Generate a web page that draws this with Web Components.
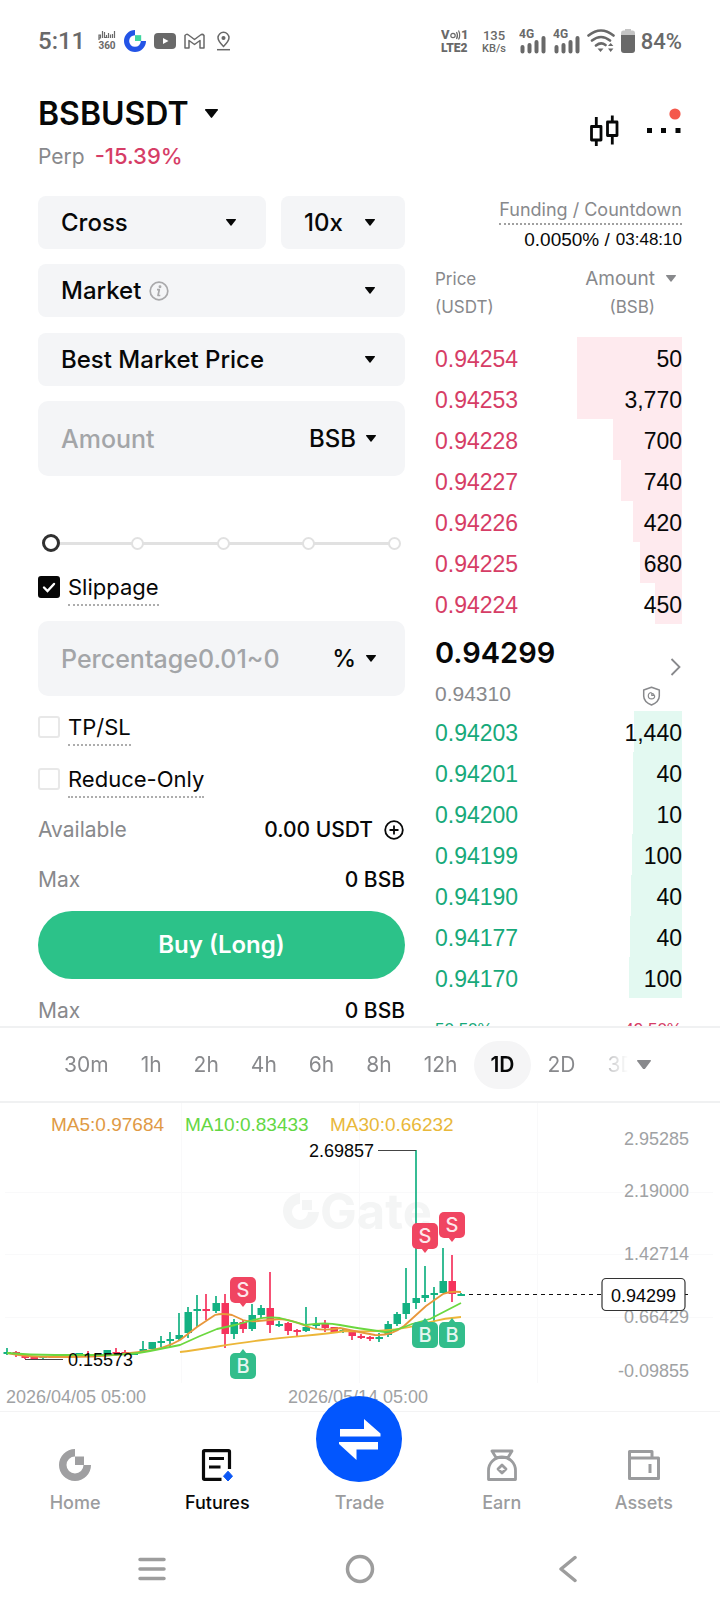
<!DOCTYPE html>
<html lang="en">
<head>
<meta charset="utf-8">
<meta name="viewport" content="width=device-width, initial-scale=1">
<title>BSBUSDT Perp</title>
<style>
  html, body { margin: 0; height: 100%; background: #fff; }
  body {
    --ink: #070808;
    --muted: #88898c;
    --faint: #a0a2a4;
    --field: #f4f5f7;
    --up: #17a97a;
    --down: #d63d66;
    --sans: Inter, "Liberation Sans", sans-serif;
    --num: "Liberation Sans", Arial, sans-serif;
    font-family: var(--sans);
    color: var(--ink);
  }
</style>
</head>
<body>
<trade-app></trade-app>

<script>
const define = (name, html, setup) => {
  const tpl = document.createElement('template');
  tpl.innerHTML = html;
  customElements.define(name, class extends HTMLElement {
    connectedCallback() {
      if (this.shadowRoot) return;
      const root = this.attachShadow({ mode: 'open' });
      root.append(tpl.content.cloneNode(true));
      if (setup) setup(this, root);
    }
  });
};

/* Small down-pointing triangle */
define('caret-down', `
<style>
  :host { display: block; flex: none; width: var(--caret, 10px); color: inherit; pointer-events: none; }
  svg { display: block; width: 100%; }
</style>
<svg viewBox="0 0 10 7" aria-hidden="true"><path d="M.4 0h9.2q.6.3.2.9L5.5 6.6q-.5.5-1 0L.2.9Q-.2.3.4 0z" fill="currentColor"/></svg>`);

define('status-bar', `
<style>
  :host { display: flex; align-items: center; justify-content: space-between; height: 82px; padding: 0 38px; color: #696969; font-family: Roboto, sans-serif; font-weight: 500; }
  div { display: flex; align-items: center; }
  svg { display: block; flex: none; }
  .time { font-size: 24px; width: 60px; }
  .left { gap: 8px; }
  .left .time { margin-right: -8px; }
  .right { gap: 6px; }
  .pct { font-size: 22px; }
  text { fill: currentColor; font-family: Roboto, sans-serif; }
</style>
<div class="left">
  <span class="time">5:11</span>
  <svg width="18" height="24" viewBox="0 0 18 24" fill="none" stroke="currentColor" stroke-width="1.200">
    <path d="M1 11V6h1.500v3H1M4.500 2v7M6.500 3v6M6.500 8.500h3M8.500 6v3M10.500 4v5M12.500 5.500v3.500M14.500 5v4M16.500 2v7"/>
    <text x="9" y="20" font-size="10" font-weight="700" text-anchor="middle" stroke="none">360</text>
  </svg>
  <svg width="22" height="22" viewBox="0 0 32 32"><path d="M16 0v7.500A8.500 8.500 0 1 0 24.500 16H32A16 16 0 1 1 16 0z" fill="#2354e6"/><path d="M16 7.500h9V16h-9z" fill="#3fd6a0"/></svg>
  <svg width="22" height="16" viewBox="0 0 22 16"><rect width="22" height="16" rx="4" fill="currentColor"/><path d="M9 5l5.500 3L9 11z" fill="#fff"/></svg>
  <svg width="22" height="17" viewBox="0 0 22 17" fill="none" stroke="currentColor" stroke-width="1.500" stroke-linejoin="round"><path d="M1 2.500Q2.500.5 4.500 2L10.500 6.500 16.500 2q2-1.500 3.500.5V15h-4V7.500L10.500 11.500 5 7.500V15H1z"/></svg>
  <svg width="20" height="20" viewBox="0 0 20 20" fill="none" stroke="currentColor" stroke-width="1.500"><path d="M9.500 15.500C5.500 11.500 4 9.500 4 6.800a5.500 5.500 0 0 1 11 0c0 2.700-1.500 4.700-5.500 8.700z"/><circle cx="9.500" cy="7" r="1.300" fill="currentColor"/><path d="M3 18.700h13"/></svg>
</div>
<div class="right">
  <svg width="35" height="30" viewBox="0 0 35 30" fill="none" stroke="currentColor">
    <text x="0" y="13" font-size="13" font-weight="800" stroke="none">V</text>
    <circle cx="12" cy="9.500" r="2.200" stroke-width="1.200"/>
    <path d="M15.500 6q2 3.500 0 7M17.500 4.500q2.500 5 0 9" stroke-width="1.200"/>
    <text x="20" y="13" font-size="13" font-weight="800" stroke="none">1</text>
    <text x="0" y="26" font-size="12" font-weight="900" stroke="none">LTE2</text>
  </svg>
  <svg width="31" height="30" viewBox="0 0 31 30">
    <text x="12" y="14" font-size="13" font-weight="500" text-anchor="middle">135</text>
    <text x="12" y="26" font-size="11" font-weight="500" text-anchor="middle">KB/s</text>
  </svg>
  <svg width="28" height="26" viewBox="0 0 28 26">
    <text x="0" y="10" font-size="12" font-weight="700">4G</text>
    <path d="M3.500 19v4.500M10.500 17v6.500M17.500 14v9.500M24.500 10v13.500" stroke="currentColor" stroke-width="4" stroke-linecap="round"/>
  </svg>
  <svg width="28" height="26" viewBox="0 0 28 26">
    <text x="0" y="10" font-size="12" font-weight="700">4G</text>
    <path d="M3.500 19v4.500M10.500 17v6.500M17.500 14v9.500M24.500 10v13.500" stroke="currentColor" stroke-width="4" stroke-linecap="round"/>
  </svg>
  <svg width="28" height="24" viewBox="0 0 28 24" fill="none" stroke="currentColor" stroke-width="2.600" stroke-linecap="round">
    <path d="M1.500 6.500Q14-3.500 26.500 6.500M5 11.500q9-7 18 0M9 16.500q5-4 9.500-.5"/>
    <path d="M10.500 19.500h6L13.500 23zM21 17l2.700-3 2.700 3zM21 19.500h5.400L23.700 23z" fill="currentColor" stroke="none"/>
  </svg>
  <svg width="14" height="24" viewBox="0 0 14 24"><path d="M4 1.500V0h6v1.500h2q2 0 2 2.500v3H0V4q0-2.500 2-2.500z" fill="#c4c4c4"/><path d="M0 6h14v15q0 3-3 3H3q-3 0-3-3z" fill="currentColor"/></svg>
  <span class="pct">84%</span>
</div>`);

define('pair-header', `
<style>
  :host { display: flex; align-items: center; justify-content: space-between; padding: 12px 38px 26px; }
  h1 { margin: 0; font: 600 32px/40px var(--sans); }
  button { display: flex; align-items: center; border: 0; padding: 0; background: none; color: inherit; font: inherit; }
  .pair { gap: 16px; --caret: 13px; }
  p { display: flex; align-items: baseline; gap: 10px; height: 28px; margin: 8px 0 0; font-size: 21px; line-height: 28px; color: var(--muted); }
  b { font-weight: 500; font-size: 22px; color: var(--down); }
  .tools { display: flex; gap: 27px; }
  svg { display: block; }
</style>
<div>
  <button class="pair"><h1>BSBUSDT</h1><caret-down></caret-down></button>
  <p>Perp <b>-15.39%</b></p>
</div>
<div class="tools">
  <button aria-label="Chart">
    <svg width="30" height="34" viewBox="0 0 30 34" fill="none" stroke="currentColor" stroke-width="2.800" stroke-linejoin="round"><path d="M2.500 11.500h9.500v13.500H2.500zM18.500 7h9.500v13.500h-9.500zM7.300 2v9.500M7.300 25v6M23.300 .5V7M23.300 20.500v9"/></svg>
  </button>
  <button aria-label="More">
    <svg width="36" height="52" viewBox="0 0 36 52"><path d="M1 22h5v5H1zM15 22h5v5h-5zM29.500 22h5v5h-5z" fill="currentColor"/><circle cx="29" cy="8" r="5.600" fill="#f4584c"/></svg>
  </button>
</div>`);

/* Grey drop-down field; whatever is slotted sits right after the value */
define('pick-field', `
<style>
  :host { display: flex; align-items: center; height: 53px; padding: 0 30px 0 23px; border-radius: 8px; background: var(--field); min-width: 0; box-sizing: border-box; }
  select { appearance: none; field-sizing: content; border: 0; margin: 0; padding: 0; background: none; color: inherit; font: 500 24px/32px var(--sans); }
  caret-down { margin-left: auto; }
</style>
<select><option></option></select><slot></slot><caret-down></caret-down>`,
(el, root) => {
  const s = root.querySelector('select');
  s.setAttribute('aria-label', el.getAttribute('label'));
  s.options[0].textContent = el.getAttribute('value');
});

/* Text box with a unit drop-down at its end */
define('amount-field', `
<style>
  :host { display: flex; align-items: center; height: 75px; padding: 0 29px 0 23px; border-radius: 10px; background: var(--field); box-sizing: border-box; }
  input { flex: 1; min-width: 0; border: 0; padding: 0; background: none; outline: 0; color: inherit; font: 500 25px/32px var(--sans); }
  input::placeholder { color: #a3a5a8; opacity: 1; }
  select { appearance: none; field-sizing: content; border: 0; margin: 0 10px 0 0; padding: 0; background: none; color: inherit; font: 500 24px/32px var(--sans); }
</style>
<input type="text"><select><option></option></select><caret-down></caret-down>`,
(el, root) => {
  const i = root.querySelector('input'), s = root.querySelector('select');
  i.placeholder = el.getAttribute('placeholder');
  i.setAttribute('aria-label', el.getAttribute('label'));
  s.setAttribute('aria-label', 'Unit');
  s.options[0].textContent = el.getAttribute('unit');
});

define('step-slider', `
<style>
  :host { display: block; position: relative; height: 20px; }
  .dots { display: flex; align-items: center; justify-content: space-between; height: 20px; margin: 0 4px 0 7px; background: linear-gradient(#e1e1e1, #e1e1e1) center / calc(100% - 8px) 3px no-repeat; }
  i { width: 13px; height: 13px; box-sizing: border-box; border: 2px solid #e1e1e1; border-radius: 50%; background: #fff; }
  input { position: absolute; inset: 0 0 0 4px; width: calc(100% - 4px); height: 20px; margin: 0; appearance: none; background: none; }
  input::-webkit-slider-thumb { appearance: none; width: 18px; height: 18px; box-sizing: border-box; border: 3px solid #303030; border-radius: 50%; background: #fff; }
</style>
<div class="dots"><i></i><i></i><i></i><i></i><i></i></div>
<input type="range" min="0" max="100" value="0" aria-label="Position size">`);

define('tick-box', `
<style>
  :host { display: flex; height: 30px; }
  label { display: flex; align-items: flex-start; gap: 8px; }
  .box { display: grid; flex: none; }
  input, svg { grid-area: 1 / 1; width: 22px; height: 22px; margin: 0; box-sizing: border-box; }
  input { appearance: none; border: 2px solid #e8e8e8; border-radius: 3px; background: #fff; }
  input:checked { border-color: #060606; background: #060606; }
  svg { pointer-events: none; fill: none; stroke: #fff; stroke-width: 2.400; stroke-linecap: round; visibility: hidden; }
  input:checked + svg { visibility: visible; }
  .text { font-size: 22px; line-height: 22px; padding-bottom: 6px; border-bottom: 2px dotted #adadad; }
</style>
<label><span class="box"><input type="checkbox"><svg viewBox="0 0 22 22"><path d="M6 11.500l3.500 3.500L16 8"/></svg></span><span class="text"><slot></slot></span></label>`,
(el, root) => { root.querySelector('input').checked = el.hasAttribute('checked'); });

define('info-row', `
<style>
  :host { display: flex; justify-content: space-between; font-size: 21px; line-height: 30px; color: var(--muted); }
  .value { display: flex; align-items: center; gap: 11px; font-weight: 500; color: var(--ink); }
</style>
<span><slot name="label"></slot></span><span class="value"><slot></slot></span>`);

define('order-form', `
<style>
  :host { display: flex; flex-direction: column; min-width: 0; }
  .pair { display: grid; grid-template-columns: 228fr 124fr; gap: 15px; }
  .wide { margin-top: 15px; }
  .best { margin-top: 16px; }
  step-slider { margin-top: 57px; }
  .slip { margin-top: 23px; }
  .tpsl { margin-top: 20px; }
  .reduce { margin-top: 22px; }
  .avail { margin-top: 17px; }
  .max { margin-top: 20px; }
  .max2 { margin-top: 17px; }
  svg { display: block; }
  .add { border: 0; padding: 0; background: none; color: inherit; }
  .info { margin-left: 8px; color: #a9a9ab; }
  .buy { margin-top: 16px; height: 68px; border: 0; border-radius: 34px; background: #2cc289; color: #fff; font: 600 24px/32px var(--sans); }
</style>
<div class="pair">
  <pick-field label="Margin mode" value="Cross"></pick-field>
  <pick-field label="Leverage" value="10x"></pick-field>
</div>
<pick-field class="wide" label="Order type" value="Market">
  <svg class="info" width="20" height="20" viewBox="0 0 20 20" fill="none" stroke="currentColor" stroke-width="1.700"><circle cx="10" cy="10" r="8.800"/><path d="M8 8.700h2.300L9 14.500h2.300" stroke-linejoin="round"/><circle cx="11" cy="5.800" r=".6" fill="currentColor"/></svg>
</pick-field>
<pick-field class="best" label="Price" value="Best Market Price"></pick-field>
<amount-field class="wide" label="Amount" placeholder="Amount" unit="BSB"></amount-field>
<step-slider></step-slider>
<tick-box class="slip" checked>Slippage</tick-box>
<amount-field class="wide" label="Slippage percentage" placeholder="Percentage0.01~0" unit="%"></amount-field>
<tick-box class="tpsl">TP/SL</tick-box>
<tick-box class="reduce">Reduce-Only</tick-box>
<info-row class="avail"><span slot="label">Available</span>0.00 USDT
  <button class="add" aria-label="Add funds"><svg width="21" height="20" viewBox="0 0 21 20" fill="none" stroke="currentColor" stroke-width="1.800"><circle cx="10" cy="10" r="8.800"/><path d="M5.500 10h9M10 5.500v9"/></svg></button>
</info-row>
<info-row class="max"><span slot="label">Max</span>0 BSB</info-row>
<button class="buy">Buy (Long)</button>
<info-row class="max2"><span slot="label">Max</span>0 BSB</info-row>`);

const asks = [['0.94254', '50', 105], ['0.94253', '3,770', 105], ['0.94228', '700', 69], ['0.94227', '740', 61], ['0.94226', '420', 49], ['0.94225', '680', 42], ['0.94224', '450', 27]];
const bids = [['0.94203', '1,440', 48], ['0.94201', '40', 49], ['0.94200', '10', 49], ['0.94199', '100', 50], ['0.94190', '40', 51], ['0.94177', '40', 52], ['0.94170', '100', 53]];
const bookRows = list => list.map(([p, a, d]) => `<tr style="--depth:${d}px"><td>${p}</td><td>${a}</td></tr>`).join('');

define('order-book', `
<style>
  :host { display: flex; flex-direction: column; min-width: 0; padding-top: 3px; }
  .funding { align-self: flex-end; font-size: 18px; line-height: 22px; padding-bottom: 2px; border-bottom: 2px dotted #a0a0a0; color: var(--muted); }
  .rate { align-self: flex-end; display: flex; align-items: center; gap: 6px; margin: 3px 0 13px; font: 19px/24px var(--num); white-space: nowrap; }
  .rate time { font-size: 17px; }
  table { width: 100%; border-collapse: collapse; }
  th { padding: 0 0 16px; font-weight: 400; font-size: 17px; line-height: 28px; color: var(--muted); text-align: left; vertical-align: top; }
  th + th { text-align: right; }
  .sort { display: inline-flex; gap: 11px; border: 0; padding: 0 6px 0 0; background: none; color: inherit; font: 19px/28px var(--sans); text-align: right; }
  .sort small { display: block; font-size: 17px; }
  .sort caret-down { margin-top: 10px; }
  td { height: 41px; padding: 3px 0 0; box-sizing: border-box; font: 23px/38px var(--num); color: var(--side); }
  td + td { text-align: right; color: var(--ink); }
  tbody tr { background: linear-gradient(var(--tint), var(--tint)) right / var(--depth) 100% no-repeat; }
  .asks { --side: var(--down); --tint: #feeaee; }
  .bids { --side: var(--up); --tint: #e3f9f1; }
  .mid { display: flex; justify-content: space-between; padding: 11px 0 5px; }
  .last { font: 600 29px/36px var(--sans); }
  .mark { margin-top: 11px; font: 21px/24px var(--num); color: var(--muted); }
  .side { display: flex; flex-direction: column; align-items: flex-end; padding-top: 23px; color: #88898c; }
  button { border: 0; padding: 0; background: none; color: inherit; }
  .shield { margin: 10px 21px 0 0; }
  svg { display: block; }
  .ratio { display: flex; justify-content: space-between; margin-top: 20px; font: 17px/24px var(--num); color: var(--up); }
  .ratio span + span { color: var(--down); }
</style>
<span class="funding">Funding / Countdown</span>
<div class="rate"><span>0.0050% /</span><time>03:48:10</time></div>
<table class="asks">
  <thead><tr><th scope="col">Price<br>(USDT)</th><th scope="col"><button class="sort"><span>Amount<small>(BSB)</small></span><caret-down></caret-down></button></th></tr></thead>
  <tbody>${bookRows(asks)}</tbody>
</table>
<div class="mid">
  <div><div class="last">0.94299</div><div class="mark">0.94310</div></div>
  <div class="side">
    <button aria-label="Price details"><svg width="12" height="18" viewBox="0 0 12 18" fill="none" stroke="currentColor" stroke-width="1.800"><path d="M1.500 1l8 8-8 8"/></svg></button>
    <svg class="shield" width="19" height="20" viewBox="0 0 19 20" fill="none" stroke="currentColor" stroke-width="1.500"><path d="M9.500 1.200L17.300 4v6c0 4-3 7-7.800 9-4.800-2-7.800-5-7.800-9V4z" stroke-linejoin="round"/><path d="M9.500 6.500a3.200 3.200 0 1 0 3.200 3.200M9.800 9.500V7.300q2 .2 2.500 2.200z" stroke-width="1.200"/></svg>
  </div>
</div>
<table class="bids"><tbody>${bookRows(bids)}</tbody></table>
<div class="ratio"><span>50.50%</span><span>49.50%</span></div>`);

define('period-tabs', `
<style>
  :host { display: flex; align-items: center; height: 77px; padding: 0 69px 0 49px; border: solid #f0f1f2; border-width: 2px 0; box-sizing: border-box; color: var(--muted); }
  nav { display: flex; gap: 2px; flex: 1; min-width: 0; overflow: hidden; mask-image: linear-gradient(90deg, #000 calc(100% - 40px), transparent); }
  button { flex: none; height: 48px; border: 0; border-radius: 24px; padding: 0 15px; background: none; color: inherit; font: 400 21px/48px var(--sans); }
  button[aria-pressed] { padding: 0 16px; background: #f5f5f6; color: var(--ink); font-weight: 600; }
  .more { padding: 0; margin-left: 9px; --caret: 14px; }
</style>
<nav><button>30m</button><button>1h</button><button>2h</button><button>4h</button><button>6h</button><button>8h</button><button>12h</button><button aria-pressed="true">1D</button><button>2D</button><button>3D</button></nav>
<button class="more" aria-label="More periods"><caret-down></caret-down></button>`);

/* Candles: x, high, low, body top, body bottom, 1 = rising / 0 = falling */
const candles = [
  [7,1348,1355,1352,1354,1],[16,1351,1357,1352,1354,0],[25,1355,1359,1356,1358,0],[34,1357,1359,1357,1359,0],[43,1357,1359,1357,1358,1],
  [52,1356,1358,1356,1358,0],[61,1356,1358,1356,1358,1],[70,1355,1357,1355,1357,0],[79,1353,1356,1353,1356,1],[88,1351,1357,1354,1356,0],
  [98,1353,1356,1354,1356,0],[107,1350,1356,1350,1355,1],[116,1348,1356,1352,1355,0],[125,1350,1355,1352,1354,0],[134,1352,1355,1353,1355,1],
  [143,1341,1353,1349,1352,1],[152,1342,1349,1342,1349,1],[161,1336,1347,1341,1343,1],[170,1332,1347,1339,1341,1],[179,1313,1340,1335,1339,1],
  [188,1307,1338,1312,1333,1],[197,1295,1327,1309,1311,1],[206,1294,1320,1309,1311,0],[216,1296,1313,1303,1311,1],[225,1294,1348,1303,1334,0],
  [234,1319,1339,1322,1334,1],[243,1320,1333,1322,1329,0],[252,1304,1331,1315,1329,1],[261,1305,1319,1308,1315,1],[270,1272,1333,1308,1325,0],
  [279,1321,1327,1324,1326,1],[288,1322,1335,1323,1331,0],[297,1329,1336,1330,1332,0],[306,1307,1332,1327,1331,1],[316,1317,1329,1324,1326,1],
  [325,1320,1332,1323,1328,0],[334,1327,1332,1327,1332,0],[343,1328,1333,1330,1332,1],[352,1331,1340,1332,1336,0],[361,1334,1339,1336,1338,0],
  [370,1336,1341,1337,1339,0],[379,1333,1342,1337,1339,1],[388,1321,1337,1324,1335,1],[397,1312,1326,1314,1324,1],[406,1268,1319,1303,1314,1],
  [416,1150,1309,1298,1303,1],[425,1266,1302,1295,1298,1],[434,1287,1322,1293,1295,1],[443,1248,1293,1281,1293,1],[452,1255,1302,1281,1294,0],[461,1293,1296,1294,1296,1]
];
const candleSvg = candles.map(([x, h, l, t, b, up]) => {
  const c = up ? '#13b182' : '#f5335d';
  return `<path d="M${x} ${h}V${l}" stroke="${c}" stroke-width="1.700"/><rect x="${x - 3.5}" y="${t}" width="7.500" height="${b - t}" fill="${c}"/>`;
}).join('');
const marker = (x, y, kind) => {
  const s = kind === 'S';
  const tip = s ? `M${x - 4} ${y + 12}h8l-4 5z` : `M${x - 4} ${y - 12}h8l-4-5z`;
  return `<g fill="${s ? '#f04561' : '#32bd8b'}"><rect x="${x - 13}" y="${y - 13}" width="26" height="26" rx="5"/><path d="${tip}"/></g><text class="mk" x="${x}" y="${y + 7}">${kind}</text>`;
};

define('price-chart', `
<style>
  :host { display: block; }
  svg { display: block; width: 100%; }
  text { font: 18px var(--num); fill: var(--ink); }
  .axis { fill: var(--faint); text-anchor: end; }
  .date { fill: var(--faint); }
  .ma { font-size: 19px; }
  .mk { font: 500 20px var(--sans); fill: #fff; fill-opacity: .88; text-anchor: middle; }
  .wm { font: 700 49px var(--sans); fill: #f4f5f5; }
  .grid { stroke: #f9f9fa; }
</style>
<svg viewBox="0 1103 720 308" role="img" aria-label="BSBUSDT daily candles">
  <path class="grid" d="M5 1192.500h708M5 1254.500h708M5 1317.500h708M181.500 1103v280M359.500 1103v280M537.500 1103v280"/>
  <path d="M300 1193v11a8 8 0 1 0 8 8h11a18 18 0 1 1-19-19zM302 1200h10v10h-10z" fill="#f4f5f5"/>
  <text class="wm" x="320" y="1229">Gate</text>
  ${candleSvg}
  <g fill="none" stroke-width="1.800" stroke-linejoin="round">
    <path stroke="#ecb638" d="M180 1352C205 1349 230 1344 263 1340S320 1335 345 1331Q370 1332 390 1330T430 1322Q445 1318 461 1317"/>
    <path stroke="#e8973b" d="M7 1353Q25 1357 55 1357T100 1356 140 1352 180 1340L197 1327 215 1315Q222 1313 232 1315L243 1320Q250 1322 258 1321L280 1319Q292 1320 306 1326T340 1328Q358 1332 375 1335 391 1336 404 1326L426 1306 443 1294Q450 1291 461 1292"/>
    <path stroke="#6bd83f" d="M7 1353Q30 1355 55 1355T105 1355 150 1351 180 1345L200 1336 217 1329 235 1325 250 1321Q266 1316 280 1318L306 1325Q325 1322 340 1325T385 1332Q398 1330 412 1324L430 1319 461 1303"/>
  </g>
  <path d="M25 1359.500h38M378 1150.500h38" stroke="#444" fill="none"/>
  <text x="309" y="1157">2.69857</text>
  <text x="68" y="1366">0.15573</text>
  <text class="ma" x="51" y="1131" style="fill:#e09a45">MA5:0.97684</text>
  <text class="ma" x="185" y="1131" style="fill:#63d743">MA10:0.83433</text>
  <text class="ma" x="330" y="1131" style="fill:#e9b83a">MA30:0.66232</text>
  ${marker(243, 1290, 'S')}${marker(425, 1236, 'S')}${marker(452, 1225, 'S')}
  ${marker(243, 1366, 'B')}${marker(425, 1335, 'B')}${marker(452, 1335, 'B')}
  <text class="axis" x="689" y="1145">2.95285</text>
  <text class="axis" x="689" y="1197">2.19000</text>
  <text class="axis" x="689" y="1260">1.42714</text>
  <text class="axis" x="689" y="1323">0.66429</text>
  <text class="axis" x="689" y="1377">-0.09855</text>
  <path d="M469 1294.500h133M685 1294.500h3" stroke="#111" stroke-width="1.200" stroke-dasharray="4 4"/>
  <rect x="602" y="1278.500" width="83" height="32" rx="4" fill="#fff" stroke="#333" stroke-width="1.200"/>
  <text x="611" y="1302">0.94299</text>
  <text class="date" x="6" y="1403">2026/04/05 05:00</text>
  <text class="date" x="288" y="1403">2026/05/14 05:00</text>
</svg>`);

define('nav-item', `
<style>
  :host { display: block; }
  a { display: flex; flex-direction: column; align-items: center; color: var(--item, #9b9c9e); text-decoration: none; font-weight: 500; font-size: 18px; line-height: 24px; }
  .icon { display: block; margin-bottom: 10px; }
</style>
<a href="#"><span class="icon"><slot name="icon"></slot></span><slot></slot></a>`);

define('bottom-nav', `
<style>
  :host { display: grid; grid-template-columns: repeat(5, 1fr); padding: 37px 5px 15px 4px; border-top: 1px solid #f3f3f4; }
  svg { display: block; }
  .on { --item: var(--ink); }
  .disc { position: relative; margin: -53px 0 -1px; }
</style>
<nav-item><svg slot="icon" width="32" height="32" viewBox="0 0 32 32" fill="#9f9fa1"><path d="M16 0v7.500A8.500 8.500 0 1 0 24.500 16H32A16 16 0 1 1 16 0zM16 7.500h9V16h-9z"/></svg>Home</nav-item>
<nav-item class="on"><svg slot="icon" width="32" height="32" viewBox="0 0 32 32" fill="none" stroke="#0a0a0a" stroke-width="3.200"><path d="M28.500 20V2.700q0-1-1-1H3.500q-1 0-1 1v26.600q0 1 1 1H20.500" /><path d="M8 9.500h15M8 18h11.500"/><path d="M27 22.200l4.500 5L27 32 22.500 27.200z" fill="#0b57f5" stroke="#0b57f5" stroke-width="1" stroke-linejoin="round"/></svg>Futures</nav-item>
<nav-item><svg slot="icon" class="disc" width="86" height="86" viewBox="0 0 86 86"><circle cx="43" cy="43" r="43" fill="#0256fe"/><path d="M24 33h24V23l16.500 14.500v3H24zM62 46v7.500H40.500V64L23 48v-2z" fill="#fff"/></svg>Trade</nav-item>
<nav-item><svg slot="icon" width="32" height="32" viewBox="0 0 32 32" fill="none" stroke="#9b9c9e" stroke-width="2.800" stroke-linejoin="round"><path d="M6 2h20l-4 6.500H10zM2.500 30.500V21.500a13.500 13.500 0 0 1 27 0v9z"/><path d="M16 16l4 4-4 4-4-4z"/></svg>Earn</nav-item>
<nav-item><svg slot="icon" width="34" height="32" viewBox="0 0 34 32" fill="none" stroke="#9b9c9e" stroke-width="3" stroke-linejoin="round"><path d="M25 9V2.500H2.500v27h29V9H3M23 15v9"/></svg>Assets</nav-item>`);

define('system-nav', `
<style>
  :host { display: grid; grid-template-columns: repeat(3, 1fr); justify-items: center; align-items: center; height: 78px; padding: 0 48px; }
  button { border: 0; padding: 0; background: none; color: #9d9d9d; }
  svg { display: block; fill: none; stroke: currentColor; stroke-width: 3.500; stroke-linecap: round; stroke-linejoin: round; }
</style>
<button aria-label="Recent apps"><svg width="28" height="28" viewBox="0 0 28 28"><path d="M2 4.500h24M2 14h24M2 23.500h24"/></svg></button>
<button aria-label="Home"><svg width="30" height="30" viewBox="0 0 30 30"><circle cx="15" cy="15" r="12.500"/></svg></button>
<button aria-label="Back"><svg width="18" height="28" viewBox="0 0 18 28"><path d="M16 2.500L2 14l14 11.500"/></svg></button>`);

define('trade-app', `
<style>
  :host { display: flex; flex-direction: column; height: 100vh; overflow: hidden; background: #fff; }
  status-bar, pair-header, period-tabs, price-chart, bottom-nav, system-nav { flex: none; }
  main { flex: 1; min-height: 0; overflow: hidden; display: grid; grid-template-columns: 367fr 247fr; align-items: start; gap: 30px; padding: 0 38px; }
</style>
<status-bar></status-bar>
<pair-header></pair-header>
<main><order-form></order-form><order-book></order-book></main>
<period-tabs></period-tabs>
<price-chart></price-chart>
<bottom-nav></bottom-nav>
<system-nav></system-nav>`);
</script>
</body>
</html>
